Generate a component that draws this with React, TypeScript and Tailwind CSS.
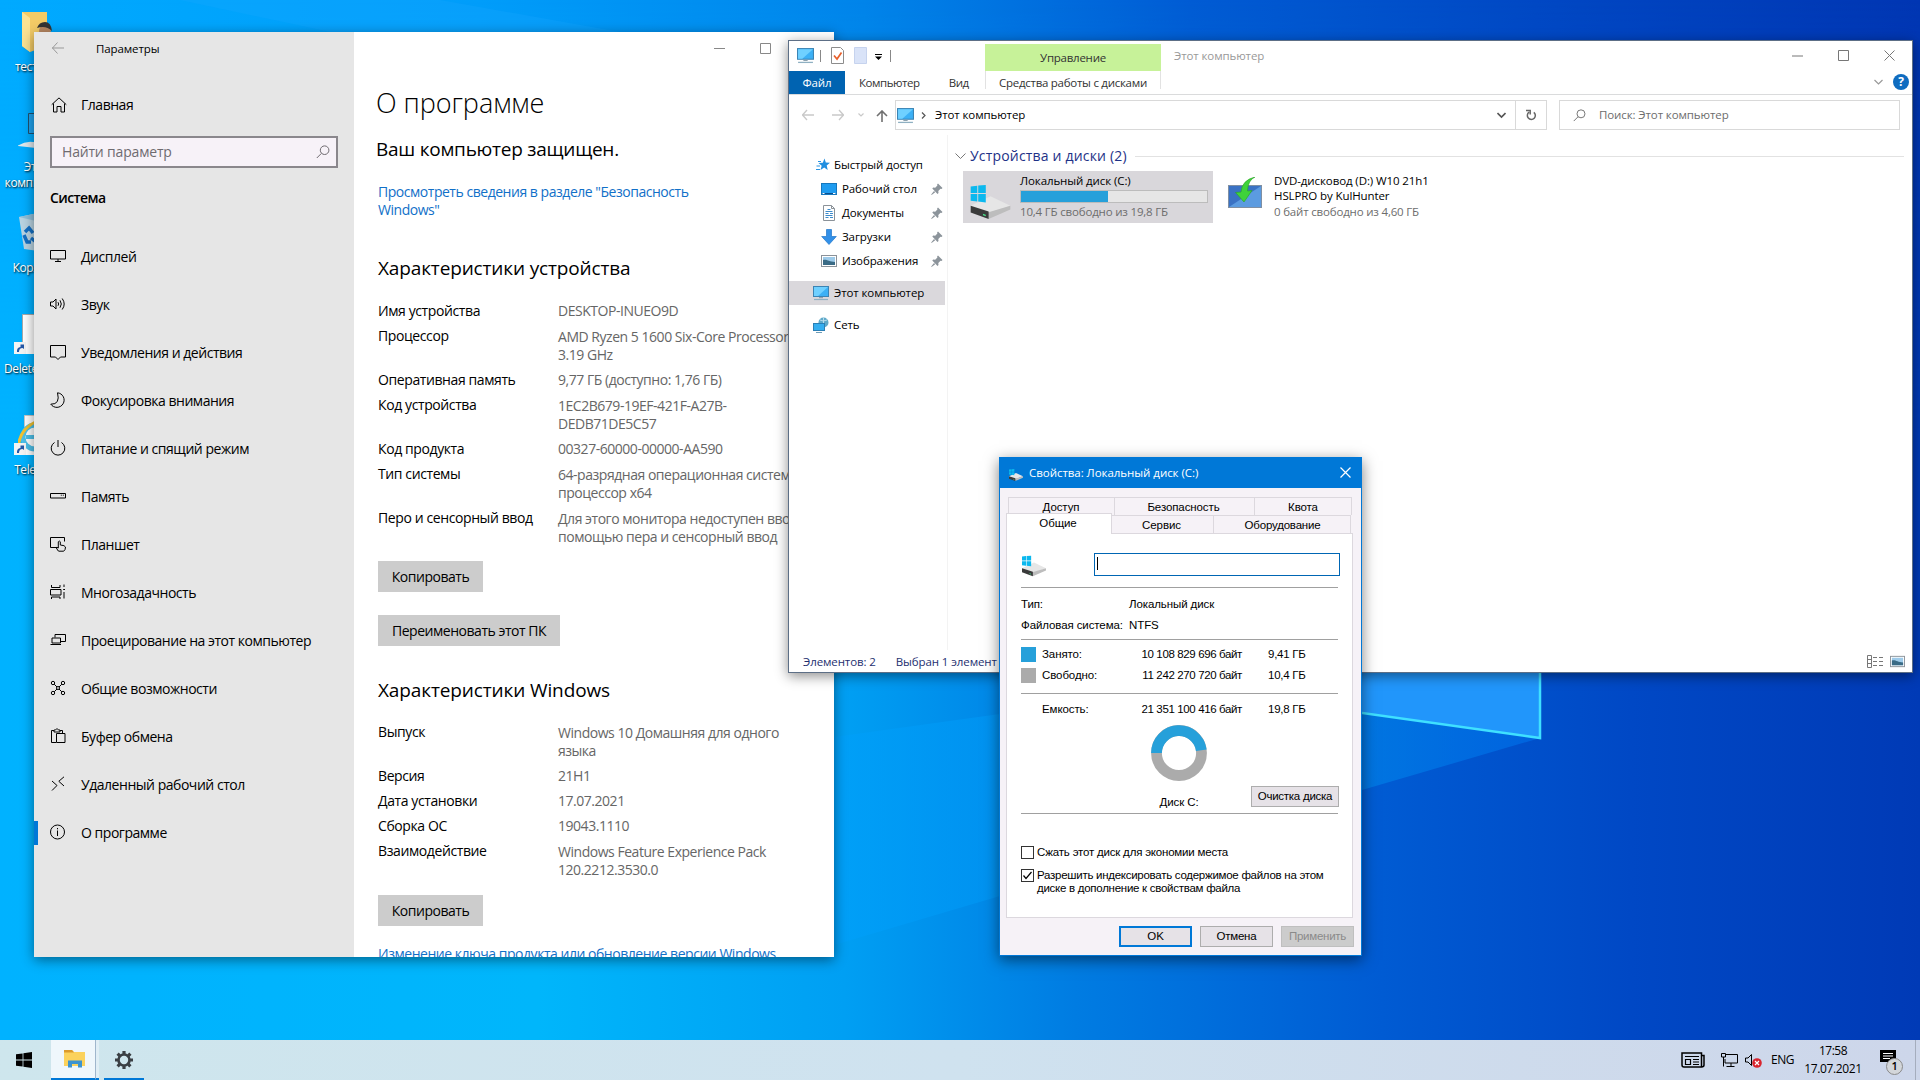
import type { ReactNode } from 'react';

interface IconProps {
  children: ReactNode;
  className?: string;
  viewBox?: string;
}

// Thin outline icon on a 16px grid
function Line({ children, className = 'h-4 w-4', viewBox = '0 0 16 16' }: IconProps) {
  return (
    <svg
      viewBox={viewBox}
      className={`shrink-0 ${className}`}
      fill="none"
      stroke="currentColor"
      strokeWidth="1"
    >
      {children}
    </svg>
  );
}

function MonitorIcon({ className = 'h-4 w-4' }: { className?: string }) {
  return (
    <svg viewBox="0 0 16 16" className={`shrink-0 ${className}`}>
      <rect x="0.5" y="1.5" width="15" height="10" fill="#3cb0f5" stroke="#3b84b4" />
      <path d="M1 2h14L5 11H1z" fill="#6fd0ff" />
      <path d="M6 12h4v1.2H6z" fill="#8ea3b0" />
      <path d="M1 14.5h14" stroke="#8fb0c2" strokeWidth="1.2" />
    </svg>
  );
}

function DriveIcon({ className }: { className: string }) {
  return (
    <svg viewBox="0 0 42 36" className={`shrink-0 ${className}`}>
      <path d="M0 22L21 12L42 22L20 30L0 25z" fill="#e6e6e6" />
      <path d="M18 29L42 22V26L19 36z" fill="#bdbdbd" />
      <path d="M0 22L19 28V36L0 29z" fill="#3a3a3a" />
      <path d="M13 30.500l3 1v1.500l-3-1z" fill="#4be08a" />
      <path d="M0 1.500L7 .7V8.500H0zM8 .6L16 0V8.500H8zM0 9.500H7V17.500L0 16.700zM8 9.500H16V18.400L8 17.600z" fill="#0bb8ee" />
    </svg>
  );
}

function PictureIcon({ className = 'h-4 w-4' }: { className?: string }) {
  return (
    <svg viewBox="0 0 16 16" className={`shrink-0 ${className}`}>
      <rect x="0.5" y="2.5" width="15" height="11" fill="#fff" stroke="#8b9299" />
      <rect x="2" y="4" width="12" height="8" fill="#9ecbea" />
      <path d="M2 7c4-1 6 2 12 2v3H2z" fill="#3a6b86" />
    </svg>
  );
}

function SearchIcon({ className = 'h-[14px] w-[14px]' }: { className?: string }) {
  return (
    <Line className={className} viewBox="0 0 14 14">
      <circle cx="8.6" cy="5.2" r="4.3" />
      <path d="M5.4 8.4L.8 13" />
    </Line>
  );
}

function PinIcon() {
  return (
    <svg viewBox="0 0 12 12" className="h-3 w-3 shrink-0" fill="#8c949b">
      <path d="M7 .5L11.500 5l-1 .9-1-.2L7.300 8l.2 2-1 .9L1.300 5.600l.9-1 2 .2L6.400 2.500 6.100 1.400zM3 8l1.200 1.200L.6 11.900l-.4-.4z" />
    </svg>
  );
}

const NAV_ITEMS: { label: string; icon: ReactNode }[] = [
  { label: 'Дисплей', icon: <path d="M.5 2.500h15v8.500H.5zM8 11v2.500M5 13.500h6" /> },
  { label: 'Звук', icon: <path d="M.5 6v4H3l3 3V3L3 6zM8 6.200q1.300 1.800 0 3.600M10 4.300q2.600 3.700 0 7.400M12.200 2.500q4 5.500 0 11" /> },
  { label: 'Уведомления и действия', icon: <path d="M.5 1.500h15v11.500H10.500L8 15.500 5.500 13H.5z" /> },
  { label: 'Фокусировка внимания', icon: <path d="M7.500.800A7.300 7.300 0 1 1 .8 12.200Q10.500 12.500 7.500.8z" /> },
  { label: 'Питание и спящий режим', icon: <path d="M4.500 2.500A6.800 6.800 0 1 0 11.500 2.500M8 0v7" /> },
  { label: 'Память', icon: <path d="M.5 5.500h15v4.500H.5zM10.800 7.200h1M12.800 7.200h1" /> },
  { label: 'Планшет', icon: <path d="M7.500 11.500H.5v-10h14v4M8.300 15L6.300 12q.2-1.300 2 0V5.800q1-1.600 2 0V9q4.700.3 5.200 2 0 3-1.800 4.200H9z" /> },
  { label: 'Многозадачность', icon: <path d="M1.500 1v2.500h8.500V1M.5 5.500h10.500v5.500H.5zM1.500 15v-2h8.500v2M14 .5v2.500M14 8v6.500M13.200 5.500h1.800" /> },
  { label: 'Проецирование на этот компьютер', icon: <path d="M5 5.500V2.500h10.500v7H11M2 6h8.500v5H2zM.5 12.500h10.500" /> },
  {
    label: 'Общие возможности',
    icon: (
      <>
        <circle cx="3" cy="3" r="1.700" />
        <circle cx="13" cy="3" r="1.700" />
        <circle cx="3" cy="13" r="1.700" />
        <circle cx="13" cy="13" r="1.700" />
        <circle cx="8" cy="8" r="1.500" />
        <path d="M4.200 4.200L7 7M11.800 4.200L9 7M4.200 11.800L7 9M11.800 11.800L9 9" />
      </>
    ),
  },
  { label: 'Буфер обмена', icon: <path d="M6 14.500H1.500v-12H4M10 2.500h2.500V5M4 4V2h1.500Q7-1 8.500 2H10v2zM6.500 5.500h8.500v9H6.500z" /> },
  { label: 'Удаленный рабочий стол', icon: <path d="M2 5l5 4.500L2 14.500M14 .8L8.800 5.300 14 10" /> },
  {
    label: 'О программе',
    icon: (
      <>
        <circle cx="7.500" cy="8" r="7" />
        <path d="M7.500 6.500V12M7.500 4v1.300" />
      </>
    ),
  },
];

const DEVICE_SPECS: [string, string[]][] = [
  ['Имя устройства', ['DESKTOP-INUEO9D']],
  ['Процессор', ['AMD Ryzen 5 1600 Six-Core Processor', '3.19 GHz']],
  ['Оперативная память', ['9,77 ГБ (доступно: 1,76 ГБ)']],
  ['Код устройства', ['1EC2B679-19EF-421F-A27B-', 'DEDB71DE5C57']],
  ['Код продукта', ['00327-60000-00000-AA590']],
  ['Тип системы', ['64-разрядная операционная система,', 'процессор x64']],
  ['Перо и сенсорный ввод', ['Для этого монитора недоступен ввод с', 'помощью пера и сенсорный ввод']],
];

const WINDOWS_SPECS: [string, string[]][] = [
  ['Выпуск', ['Windows 10 Домашняя для одного', 'языка']],
  ['Версия', ['21H1']],
  ['Дата установки', ['17.07.2021']],
  ['Сборка ОС', ['19043.1110']],
  ['Взаимодействие', ['Windows Feature Experience Pack', '120.2212.3530.0']],
];

function SpecTable({ rows }: { rows: [string, string[]][] }) {
  return (
    <dl>
      {rows.map(([label, lines]) => (
        <div key={label} className={`flex leading-[18px] ${lines.length > 1 ? 'h-11' : 'h-[25px]'}`}>
          <dt className="w-[180px] shrink-0 tracking-[-0.4px]">{label}</dt>
          <dd className={`whitespace-nowrap text-[#666] ${lines.length > 1 ? 'pt-px' : ''}`}>
            {lines.map((line) => (
              <div key={line}>{line}</div>
            ))}
          </dd>
        </div>
      ))}
    </dl>
  );
}

function SettingsWindow() {
  return (
    <section className="absolute left-[34px] top-8 flex h-[925px] w-[800px] overflow-hidden bg-white text-sm tracking-[-0.47px] text-black shadow-[0_3px_12px_rgba(0,0,0,0.45)]">
      <aside className="flex w-80 shrink-0 flex-col bg-[#e6e6e6]">
        <div className="flex h-8 items-center pl-[18px]">
          <Line className="h-3 w-3 text-[#999]" viewBox="0 0 12 12">
            <path d="M0 6h12M5.500.5L.5 6l5 5.500" />
          </Line>
          <span className="pl-8 pt-0.5 text-[11.500px] tracking-[-0.1px]">Параметры</span>
        </div>
        <div className="mt-[25px] flex h-8 items-center pl-[17px]">
          <Line className="h-4 w-4">
            <path d="M.7 7.700L8 .9l7.300 6.800M2.500 6.500v8.500h3.500V9.500h4V15h3.500V6.500" />
          </Line>
          <span className="pl-[14px]">Главная</span>
        </div>
        <div className="ml-4 mt-[15px] flex h-8 w-72 items-center justify-between border-2 border-[#8a878c] bg-[#f7f2f8] pl-2.5 pr-1.5 text-[#6f6b70]">
          <span className="tracking-[-0.18px]">Найти параметр</span>
          <SearchIcon />
        </div>
        <h2 className="mt-5 h-5 pl-4 font-semibold leading-5 tracking-[-0.6px]">Система</h2>
        <nav className="mt-[25px]">
          {NAV_ITEMS.map((item) => (
            <div key={item.label} className="flex h-12 items-center">
              <span className={`h-6 w-1 ${item.label === 'О программе' ? 'bg-[#0078d7]' : ''}`} />
              <Line className="-mt-[3px] ml-3 h-4 w-4">{item.icon}</Line>
              <span className="pl-[15px]">{item.label}</span>
            </div>
          ))}
        </nav>
      </aside>

      <main className="flex grow flex-col pl-6">
        <div className="flex h-8 shrink-0 items-center gap-[35px] pl-[336px] text-[#888]">
          <Line className="h-[11px] w-[11px]" viewBox="0 0 11 11">
            <path d="M0 5.500h11" />
          </Line>
          <Line className="h-[11px] w-[11px]" viewBox="0 0 11 11">
            <path d="M.5.500h10v10H.5z" />
          </Line>
        </div>
        <h1 className="-ml-[2px] mt-[21px] h-9 shrink-0 text-[27px] font-light leading-9 tracking-[-0.05px]">О программе</h1>
        <p className="-ml-[2px] mt-[14px] h-7 shrink-0 text-[19px] leading-7 tracking-[-0.25px]">Ваш компьютер защищен.</p>
        <p className="mt-5 h-9 shrink-0 leading-[18px] text-[#1170c8]">
          Просмотреть сведения в разделе "Безопасность
          <br />
          Windows"
        </p>
        <h2 className="mt-[35px] h-7 shrink-0 text-[19px] leading-7 tracking-[-0.14px]">Характеристики устройства</h2>
        <div className="mt-[20px] shrink-0">
          <SpecTable rows={DEVICE_SPECS} />
        </div>
        <button className="mt-[8px] h-[31px] w-[105px] shrink-0 bg-[#cccccc]">Копировать</button>
        <button className="mt-[23px] h-[31px] w-[182px] shrink-0 bg-[#cccccc]">Переименовать этот ПК</button>
        <h2 className="mt-[30px] h-7 shrink-0 text-[19px] leading-7 tracking-[-0.12px]">Характеристики Windows</h2>
        <div className="mt-[19px] shrink-0">
          <SpecTable rows={WINDOWS_SPECS} />
        </div>
        <button className="mt-[9px] h-[31px] w-[105px] shrink-0 bg-[#cccccc]">Копировать</button>
        <p className="mt-[18px] shrink-0 whitespace-nowrap text-[#1170c8]">Изменение ключа продукта или обновление версии Windows</p>
      </main>
    </section>
  );
}

const QUICK_ACCESS: { label: string; icon: ReactNode }[] = [
  {
    label: 'Рабочий стол',
    icon: (
      <svg viewBox="0 0 16 16" className="h-4 w-4">
        <rect x="0.5" y="2.500" width="15" height="11" fill="#1f9cf0" stroke="#1677bd" />
        <path d="M1 12.500h14" stroke="#0a4f8f" />
        <path d="M1.500 12.500h2M12 12.500h2.500" stroke="#fff" />
      </svg>
    ),
  },
  {
    label: 'Документы',
    icon: (
      <svg viewBox="0 0 16 16" className="h-4 w-4">
        <path d="M2.500.500h8l3 3v12h-11z" fill="#fff" stroke="#8b9299" />
        <path d="M10.500.500v3h3" fill="none" stroke="#8b9299" />
        <path d="M6.500 4.500h3M4.500 6.500h7M4.500 8.500h3M9 8.500h3M4.500 10.500h7M4.500 12.500h3M9 12.500h3" stroke="#3d8bcb" />
      </svg>
    ),
  },
  {
    label: 'Загрузки',
    icon: (
      <svg viewBox="0 0 16 16" className="h-4 w-4">
        <path d="M5.500.500h5v7h4.800L8 15.500.7 7.500h4.800z" fill="#3290e8" stroke="#1f76c9" strokeWidth="0.700" />
      </svg>
    ),
  },
  { label: 'Изображения', icon: <PictureIcon /> },
];

function ExplorerWindow() {
  return (
    <section className="absolute left-[788px] top-10 flex h-[633px] w-[1125px] flex-col border border-[#5d6f86] bg-white text-[11.500px] tracking-[-0.1px] text-black shadow-[0_3px_12px_rgba(0,0,0,0.45)]">
      {/* Title bar and ribbon tabs */}
      <header className="flex h-[54px] shrink-0 border-b border-[#dadbdc] text-[#333]">
        <div className="flex w-[196px] shrink-0 flex-col">
          <div className="flex h-[29px] items-center pl-2">
            <MonitorIcon className="h-[17px] w-[17px]" />
            <span className="ml-[6px] h-3 w-px bg-[#888]" />
            <svg viewBox="0 0 13 17" className="ml-[10px] h-[17px] w-[13px]">
              <path d="M.5.500h9l3 3v13H.5z" fill="#fff" stroke="#8c8c8c" />
              <path d="M3 8.500l3 3.500 4.500-6.500" fill="none" stroke="#e8602c" strokeWidth="1.700" />
            </svg>
            <svg viewBox="0 0 13 17" className="ml-[10px] h-[17px] w-[13px]">
              <path d="M.5.500h12v16H.5z" fill="#d9e3f8" stroke="#c6d3ee" />
            </svg>
            <svg viewBox="0 0 7 6" className="ml-2 mt-[3px] h-[6px] w-[7px] fill-black">
              <path d="M0 0h7v1H0zM0 2.500h7L3.500 6z" />
            </svg>
            <span className="ml-2 h-3 w-px bg-[#888]" />
          </div>
          <div className="mt-px flex h-[23px] items-center">
            <span className="flex h-full w-14 items-center justify-center bg-[#0063b1] text-white">Файл</span>
            <span className="pl-[14px] tracking-[-0.45px]">Компьютер</span>
            <span className="pl-[29px] tracking-[-0.45px]">Вид</span>
          </div>
        </div>
        <div className="flex w-44 shrink-0 flex-col items-center pt-[3px]">
          <span className="flex h-[27px] w-full items-center justify-center bg-[#c7f299] tracking-[-0.25px]">Управление</span>
          <span className="flex h-[18px] w-full items-end justify-center whitespace-nowrap border-x border-[#e2e2e2] leading-3 tracking-[-0.27px]">
            Средства работы с дисками
          </span>
        </div>
        <span className="pl-[13px] pt-[6px] text-[#999]">Этот компьютер</span>
        <div className="ml-auto flex flex-col items-end">
          <div className="flex h-7 items-center gap-[35px] pr-[17px] text-[#777]">
            <Line className="h-[11px] w-[11px]" viewBox="0 0 11 11">
              <path d="M0 6h11" />
            </Line>
            <Line className="h-[11px] w-[11px]" viewBox="0 0 11 11">
              <path d="M.5.500h10v10H.5z" />
            </Line>
            <Line className="h-[11px] w-[11px]" viewBox="0 0 11 11">
              <path d="M.5.500l10 10M10.500.500l-10 10" />
            </Line>
          </div>
          <div className="flex items-center gap-[10px] pr-[3px] pt-[5px] text-[#999]">
            <Line className="h-2 w-[9px]" viewBox="0 0 9 8">
              <path d="M.5 2l4 4 4-4" strokeWidth="1.200" />
            </Line>
            <span className="flex h-4 w-4 items-center justify-center rounded-full bg-[#0f6cc0] text-xs font-bold text-white">?</span>
          </div>
        </div>
      </header>

      {/* Address row */}
      <div className="flex h-10 shrink-0 items-center pl-[13px] pr-[12px]">
        <Line className="h-3 w-3 text-[#c9c9c9]" viewBox="0 0 12 12">
          <path d="M0 6h12M5 1L.5 6 5 11" strokeWidth="1.300" />
        </Line>
        <Line className="ml-[18px] h-3 w-3 text-[#c9c9c9]" viewBox="0 0 12 12">
          <path d="M0 6h12M7 1l4.500 5L7 11" strokeWidth="1.300" />
        </Line>
        <Line className="ml-[14px] h-1.5 w-1.5 text-[#c9c9c9]" viewBox="0 0 6 6">
          <path d="M.5 1.500L3 4l2.500-2.500" strokeWidth="1.200" />
        </Line>
        <Line className="ml-[12px] mt-0.5 h-3 w-3 text-[#707070]" viewBox="0 0 12 12">
          <path d="M6 12V1M1 6l5-5 5 5" strokeWidth="1.600" />
        </Line>
        <div className="ml-[7px] flex h-[30px] w-[652px] shrink-0 items-center border border-[#d9d9d9] pl-px">
          <MonitorIcon className="h-[17px] w-[17px]" />
          <Line className="ml-[7px] h-[7px] w-[5px] text-[#555]" viewBox="0 0 5 7">
            <path d="M1 .5l3 3-3 3" strokeWidth="1.200" />
          </Line>
          <span className="pl-[9px]">Этот компьютер</span>
          <Line className="ml-auto h-2 w-[9px] text-[#555]" viewBox="0 0 9 8">
            <path d="M.5 2l4 4 4-4" strokeWidth="1.600" />
          </Line>
          <span className="ml-[9px] flex h-full w-[31px] items-center justify-center border-l border-[#d9d9d9]">
            <Line className="h-3 w-3 text-[#666]" viewBox="0 0 12 12">
              <path d="M8.800 3.300A4 4 0 1 1 4 3.200M1 1.500h4.200v4" strokeWidth="1.500" />
            </Line>
          </span>
        </div>
        <div className="ml-3 flex h-[30px] grow items-center border border-[#d9d9d9] pl-[13px] text-[#6d6d6d]">
          <SearchIcon className="h-[13px] w-[13px]" />
          <span className="pl-[13px]">Поиск: Этот компьютер</span>
        </div>
      </div>

      <div className="flex grow">
        <nav className="flex w-[159px] shrink-0 flex-col border-r border-[#f3f3f3] pt-[18px]">
          <div className="flex h-6 items-center pl-[27px]">
            <svg viewBox="0 0 14 14" className="h-[14px] w-[14px]">
              <path d="M8.500.5l1.300 4 4.200.2-3.300 2.800 1 4.500-3.500-2.400L4.500 12l1.200-4.300L2.500 5l4.300-.2z" fill="#1f8ee0" />
              <path d="M2 3.500h3M.5 8H4M0 11.500h4" stroke="#2a95e3" />
            </svg>
            <span className="pl-1">Быстрый доступ</span>
          </div>
          {QUICK_ACCESS.map((item) => (
            <div key={item.label} className="flex h-6 items-center pl-8 pr-[4px]">
              {item.icon}
              <span className="grow pl-[5px]">{item.label}</span>
              <PinIcon />
            </div>
          ))}
          <div className="mt-2 flex h-6 w-[156px] items-center bg-[#dad8dc] pl-6">
            <MonitorIcon />
            <span className="pl-[5px]">Этот компьютер</span>
          </div>
          <div className="mt-2 flex h-6 items-center pl-6">
            <svg viewBox="0 0 16 16" className="h-4 w-4">
              <circle cx="10.500" cy="5.500" r="5" fill="#5fa9c9" />
              <path d="M7 3q3 2 7 0M10.500.500v9" stroke="#b7dcec" fill="none" />
              <rect x="0.500" y="6.500" width="11" height="7" fill="#35aef0" stroke="#2b7fb5" />
              <path d="M3 15.500h6" stroke="#6f9db8" />
            </svg>
            <span className="pl-[5px]">Сеть</span>
          </div>
        </nav>

        <div className="flex grow flex-col">
          <div className="mt-[12px] flex h-[18px] items-center pl-[7px] pr-2">
            <Line className="h-2 w-[11px] text-[#777]" viewBox="0 0 11 8">
              <path d="M.5 1.500l5 5 5-5" />
            </Line>
            <span className="pl-1 text-sm tracking-[0.18px] text-[#1e3287]">Устройства и диски (2)</span>
            <span className="ml-2 h-px grow bg-[#e2e2e2]" />
          </div>
          <div className="mt-[6px] flex pl-[15px] leading-[15px]">
            <div className="flex h-[52px] w-[250px] bg-[#d9d7db] pl-[7px]">
              <DriveIcon className="mt-[14px] h-[34px] w-[41px]" />
              <div className="pl-[9px] pt-[2px]">
                <p>Локальный диск (C:)</p>
                <div className="mt-[2px] h-[13px] w-[188px] border border-[#bcbcbc] bg-[#e6e6e6]">
                  <div className="h-full w-[87px] bg-[#26a0da]" />
                </div>
                <p className="mt-[1px] tracking-[-0.18px] text-[#6d6d6d]">10,4 ГБ свободно из 19,8 ГБ</p>
              </div>
            </div>
            <div className="flex h-[52px] pl-[15px]">
              <svg viewBox="0 0 34 32" className="mt-[6px] h-8 w-[34px]">
                <rect x="0.500" y="8.500" width="33" height="22" fill="#3a72c4" stroke="#7f8fa3" />
                <path d="M1 30L33 9v21z" fill="#5b9be0" />
                <path d="M27 0Q20 3 19.500 14L24 13.500 16 25 7.500 15.500l5.500-.5Q14 3 27 0z" fill="#3fd23a" stroke="#26a322" strokeWidth="0.600" />
              </svg>
              <div className="pl-3 pt-[2px]">
                <p>DVD-дисковод (D:) W10 21h1</p>
                <p>HSLPRO by KulHunter</p>
                <p className="mt-[1px] tracking-[-0.18px] text-[#6d6d6d]">0 байт свободно из 4,60 ГБ</p>
              </div>
            </div>
          </div>
        </div>
      </div>

      <footer className="flex h-[22px] shrink-0 items-center pl-[14px] pr-[7px] pt-[2px] text-[#1e3070]">
        <span>Элементов: 2</span>
        <span className="pl-5 tracking-[-0.1px]">Выбран 1 элемент</span>
        <Line className="-mt-0.5 ml-auto h-[13px] w-4 text-[#777]" viewBox="0 0 16 13">
          <path d="M.5.500h4v12h-4zM.5 4.500h4M.5 8.500h4M6 2.500h4M12 2.500h4M6 6.500h4M12 6.500h4M6 10.500h4M12 10.500h4" />
        </Line>
        <PictureIcon className="-mt-0.5 ml-[7px] h-[15px] w-[15px]" />
      </footer>
    </section>
  );
}

function Rule({ className = '' }: { className?: string }) {
  return <hr className={`w-[317px] border-[#a0a0a0] ${className}`} />;
}

function UsageRow({ label, bytes, size, swatch }: { label: string; bytes: string; size: string; swatch?: string }) {
  return (
    <div className="flex h-[21px] items-center">
      <span className={`h-[15px] w-[15px] ${swatch ?? ''}`} />
      <span className="w-[85px] pl-[6px]">{label}</span>
      <span className="w-[121px] text-right tracking-[-0.37px]">{bytes}</span>
      <span className="pl-[26px] tracking-[-0.25px]">{size}</span>
    </div>
  );
}

function PropertiesDialog() {
  return (
    <section className="absolute left-[999px] top-[457px] flex h-[499px] w-[363px] flex-col border border-[#0078d7] bg-[#f6f2f7] font-['Liberation_Sans',sans-serif] text-[11.500px] tracking-[-0.1px] text-black shadow-[0_4px_14px_rgba(0,0,0,0.5)]">
      <header className="flex h-[30px] shrink-0 items-center bg-[#0078d7] pb-px pl-[9px] pr-[10px] font-['Open_Sans',sans-serif] text-white">
        <DriveIcon className="mt-1 h-[12px] w-[14px]" />
        <span className="pl-[6px] tracking-[-0.04px]">Свойства: Локальный диск (C:)</span>
        <Line className="ml-auto h-[11px] w-[11px]" viewBox="0 0 11 11">
          <path d="M.5.500l10 10M10.500.500l-10 10" strokeWidth="1.200" />
        </Line>
      </header>

      <div className="ml-2 mt-[9px] flex h-[18px] w-[344px] shrink-0 border border-b-0 border-[#dcd8de] leading-[18px]">
        <span className="w-[105px] pr-px text-center">Доступ</span>
        <span className="w-[141px] border-x border-[#dcd8de] pr-[2px] text-center">Безопасность</span>
        <span className="grow text-center">Квота</span>
      </div>
      <div className="ml-[6px] flex h-[18px] w-[346px] shrink-0">
        <span className="relative -top-[2px] z-10 h-[21px] w-[106px] border border-b-0 border-[#dcd8de] bg-white pr-[2px] text-center leading-[18px]">Общие</span>
        <span className="w-[101px] border-t border-[#dcd8de] pr-[2px] text-center leading-[18px]">Сервис</span>
        <span className="w-[138px] border-x border-t border-[#dcd8de] pl-px text-center leading-[18px] tracking-[-0.2px]">Оборудование</span>
      </div>

      <div className="ml-[6px] flex h-[385px] w-[347px] shrink-0 flex-col border border-[#dcd8de] bg-white pl-[14px]">
        <div className="mt-[18px] flex h-6 items-center">
          <DriveIcon className="ml-px mt-1 h-[22px] w-6" />
          <div className="ml-12 h-[23px] w-[246px] border border-[#0066b4] pl-[2px] pt-[3px]">
            <div className="h-[13px] w-px bg-black" />
          </div>
        </div>
        <Rule className="mt-[11px]" />
        <div className="mt-[6px] flex h-[21px] items-center">
          <span className="w-[108px]">Тип:</span>
          <span>Локальный диск</span>
        </div>
        <div className="flex h-[21px] items-center">
          <span className="w-[108px]">Файловая система:</span>
          <span>NTFS</span>
        </div>
        <Rule className="mt-[3px]" />
        <div className="mt-[4px]">
          <UsageRow label="Занято:" bytes="10 108 829 696 байт" size="9,41 ГБ" swatch="bg-[#26a0da]" />
          <UsageRow label="Свободно:" bytes="11 242 270 720 байт" size="10,4 ГБ" swatch="bg-[#ababab]" />
        </div>
        <Rule className="mt-[7px]" />
        <div className="mt-[5px]">
          <UsageRow label="Емкость:" bytes="21 351 100 416 байт" size="19,8 ГБ" />
        </div>
        <div className="flex h-[93px]">
          <div className="flex w-[230px] flex-col items-center pl-[86px] pt-[5px]">
            <svg viewBox="0 0 56 56" className="h-14 w-14 shrink-0" fill="none" strokeWidth="10.800">
              <circle cx="28" cy="28" r="22.500" stroke="#ababab" />
              <path d="M5.500 28A22.500 22.500 0 0 1 50.300 25.200" stroke="#26a0da" />
            </svg>
            <span className="mt-[13px]">Диск C:</span>
          </div>
          <button className="mt-[66px] h-[21px] w-[88px] border border-[#adadad] bg-[#e6e2e7] tracking-[-0.25px]">Очистка диска</button>
        </div>
        <Rule />
        <div className="mt-[32px] flex h-[13px] items-center">
          <span className="h-[13px] w-[13px] border border-[#333]" />
          <span className="pl-[3px] tracking-[-0.2px]">Сжать этот диск для экономии места</span>
        </div>
        <div className="mt-[10px] flex">
          <span className="h-[13px] w-[13px] border border-[#333]">
            <Line className="h-[11px] w-[11px]" viewBox="0 0 11 11">
              <path d="M1.500 5.500L4 8.500l5.500-6.500" strokeWidth="1.200" />
            </Line>
          </span>
          <p className="pl-[3px] leading-[13px] tracking-[-0.27px]">
            Разрешить индексировать содержимое файлов на этом
            <br />
            диске в дополнение к свойствам файла
          </p>
        </div>
      </div>

      <footer className="mt-[8px] flex h-[21px] justify-end gap-2 pr-[7px]">
        <button className="w-[73px] border-2 border-[#0078d7] bg-[#e6e2e7]">OK</button>
        <button className="w-[73px] border border-[#adadad] bg-[#e6e2e7] tracking-[-0.25px]">Отмена</button>
        <button className="w-[73px] border border-[#bfbfbf] bg-[#cccccc] tracking-[-0.25px] text-[#8a8a8a]">Применить</button>
      </footer>
    </section>
  );
}

function ShortcutArrow() {
  return (
    <svg viewBox="0 0 12 12" className="absolute bottom-0 left-0 h-3 w-3">
      <path d="M0 0h12v12H0z" fill="#f4f4f4" />
      <path d="M3 10Q2.500 5.500 6.500 5V2.500h3.500V7L8.500 6Q5 6 5 10z" fill="#2458a8" />
    </svg>
  );
}

const DESKTOP_ICONS: { label: string; top: string; icon: ReactNode }[] = [
  {
    label: 'тестер1',
    top: 'top-[12px]',
    icon: (
      <svg viewBox="0 0 40 40" className="h-10 w-10">
        <path d="M4 0h25v34L12 40 4 34z" fill="#f3cb66" />
        <path d="M4 0l8 6v34L4 34z" fill="#fbe293" />
        <circle cx="27" cy="19" r="6" fill="#b98963" />
        <path d="M19 16Q21 10 27 10t7 9Q28 13 19 16z" fill="#333" />
      </svg>
    ),
  },
  {
    label: 'Этот компьютер',
    top: 'top-[112px]',
    icon: (
      <svg viewBox="0 0 40 40" className="h-10 w-10">
        <path d="M10.500 1.500H40v20H10.500z" fill="#1fa3ee" stroke="#20506f" />
        <path d="M-1 34q8-5 16-4h21v8z" fill="#dfe9ee" />
      </svg>
    ),
  },
  {
    label: 'Корзина',
    top: 'top-[213px]',
    icon: (
      <svg viewBox="0 0 40 40" className="h-10 w-10">
        <path d="M1 4L20 0l20 4-5 36L6 36z" fill="#b9d4e2" />
        <path d="M1 4l17 4h22l-20-8z" fill="#8fbfd9" />
        <path d="M7 19l4-4 4 5M6 22l3 7h4M13 25l5 4" fill="none" stroke="#1470c4" strokeWidth="3.500" />
      </svg>
    ),
  },
  {
    label: 'DeleteTemp',
    top: 'top-[314px]',
    icon: (
      <svg viewBox="0 0 40 40" className="h-10 w-10">
        <path d="M4.500.500H38v40H4.500z" fill="#fff" stroke="#a8a8a8" />
      </svg>
    ),
  },
  {
    label: 'Teleport',
    top: 'top-[415px]',
    icon: (
      <svg viewBox="0 0 40 40" className="h-10 w-10">
        <path d="M6.500.500H38v40H6.500z" fill="#fff" stroke="#c8c8c8" />
        <circle cx="17" cy="22" r="12" fill="none" stroke="#4cc0ea" strokeWidth="5" />
        <path d="M8 22h20" stroke="#4cc0ea" strokeWidth="4" />
        <path d="M1 34Q-1 16 19 6" fill="none" stroke="#f2c230" strokeWidth="3" />
      </svg>
    ),
  },
];

function DesktopIcon({ label, top, icon }: { label: string; top: string; icon: ReactNode }) {
  return (
    <div className={`absolute left-0 flex w-[72px] flex-col items-center ${top}`}>
      <div className="relative h-10 w-11 pl-1">
        {icon}
        {/^[A-Z]/.test(label) && <ShortcutArrow />}
      </div>
      <span className="mt-[7px] text-center text-xs leading-4 tracking-[-0.4px] text-white [text-shadow:1px_1px_2px_#000]">{label}</span>
    </div>
  );
}

function Wallpaper() {
  return (
    <svg viewBox="0 0 1920 1080" className="absolute inset-0 h-full w-full">
      <defs>
        <linearGradient id="sky" x1="0" y1="0" x2="1" y2="0">
          <stop offset="0" stopColor="#00aaff" />
          <stop offset="0.25" stopColor="#009dfa" />
          <stop offset="0.45" stopColor="#0084ea" />
          <stop offset="0.62" stopColor="#005cd4" />
          <stop offset="0.8" stopColor="#0048c4" />
          <stop offset="1" stopColor="#0036b3" />
        </linearGradient>
        <linearGradient id="floor" x1="0" y1="0" x2="1" y2="0">
          <stop offset="0" stopColor="#00b2ff" />
          <stop offset="0.28" stopColor="#00b6fb" />
          <stop offset="0.44" stopColor="#009ff3" />
          <stop offset="0.56" stopColor="#007ce2" />
          <stop offset="0.72" stopColor="#005bd3" />
          <stop offset="0.85" stopColor="#0048c5" />
          <stop offset="1" stopColor="#003ab6" />
        </linearGradient>
        <linearGradient id="fade" x1="0" y1="0" x2="0" y2="1">
          <stop offset="0" stopColor="#000" />
          <stop offset="0.4" stopColor="#fff" />
        </linearGradient>
        <mask id="lower">
          <rect width="1920" height="1080" fill="url(#fade)" />
        </mask>
        <linearGradient id="beam" x1="0" y1="0" x2="1" y2="0">
          <stop offset="0" stopColor="#00a0fa" />
          <stop offset="0.75" stopColor="#0086ea" />
          <stop offset="1" stopColor="#0070ec" />
        </linearGradient>
      </defs>
      <rect width="1920" height="1080" fill="url(#sky)" />
      <rect width="1920" height="1080" fill="url(#floor)" mask="url(#lower)" />
      <path d="M180 0L330 32H620L440 0z" fill="#1ba6ff" opacity="0.250" />
      <path d="M834 737L1000 714V673H1540V738L1362 790 1000 896 834 945z" fill="url(#beam)" opacity="0.600" />
      <path d="M1100 673h440v65l-440-62z" fill="#2196fb" />
      <path d="M1540 673v65l-440-62" fill="none" stroke="#3fe0ff" strokeWidth="2.500" />
    </svg>
  );
}

function Taskbar() {
  return (
    <footer className="absolute bottom-0 left-0 flex h-10 w-full items-center bg-linear-to-r from-[#cee6ed] via-[#cfe2ef] to-[#cdd6ea] text-[11.500px] tracking-[-0.2px] text-black">
      <div className="flex h-full w-[51px] items-center pl-4">
        <svg viewBox="0 0 16 16" className="h-4 w-4">
          <path d="M0 2.300L6.600 1.400V7.600H0zM7.400 1.300L16 0v7.600H7.400zM0 8.400h6.600v6.200L0 13.700zM7.400 8.400H16V16l-8.600-1.300z" />
        </svg>
      </div>
      <div className="flex h-full w-11 items-center justify-center border-b-2 border-[#0078d7] bg-[#eff7fc] pl-1">
        <svg viewBox="0 0 22 18" className="h-[18px] w-[22px]">
          <path d="M0 0h8l2 2h11v14H0z" fill="#fbd25c" />
          <path d="M0 0h8l2 2.500H0z" fill="#dc9b2c" />
          <path d="M4 17.500v-7h14v7h-4v-3.500H8v3.500z" fill="#3c94cf" />
        </svg>
      </div>
      <span className="h-full w-1 border-b-2 border-l border-[#9fb6cc] border-b-[#0078d7] bg-[#e0eef5]" />
      <div className="ml-[5px] flex h-full w-10 items-center justify-center border-b-2 border-[#0078d7] pt-px text-[#3a3f44]">
        <svg viewBox="0 0 20 20" className="h-5 w-5" fill="none" stroke="currentColor">
          <circle cx="10" cy="10" r="5.500" strokeWidth="2.600" />
          <path
            d="M10 1v3M10 16v3M1 10h3M16 10h3M3.600 3.600l2.200 2.200M14.200 14.200l2.200 2.200M3.600 16.400l2.200-2.200M14.200 5.800l2.200-2.200"
            strokeWidth="3.200"
          />
        </svg>
      </div>

      <div className="ml-auto flex h-full items-center">
        <svg viewBox="0 0 24 16" className="h-4 w-6" fill="none" stroke="#000">
          <path d="M1 1h19.500v14H3Q1 15 1 13zM20.500 3.500H23V13q0 2-2.500 2" strokeWidth="1.500" />
          <path d="M4 4.500h14M12 7.500h6M12 10h6M12 12.500h6M4.500 7.500h5v5h-5z" strokeWidth="1.200" />
        </svg>
        <svg viewBox="0 0 17 15" className="ml-4 h-[15px] w-[17px]" fill="none" stroke="#000">
          <path d="M5 1.500h11.500v8.500H4V6M.5.500h4v3.500h-4zM2.500 4v9.500M10 10v3.500M5.500 13.500h8" />
        </svg>
        <svg viewBox="0 0 17 15" className="ml-[7px] h-[15px] w-[17px]" fill="none" stroke="#000">
          <path d="M.5 5v4H3l3.500 3.500v-11L3 5z" />
          <circle cx="12" cy="10" r="4.800" fill="#d9242e" stroke="none" />
          <path d="M10 8l4 4M14 8l-4 4" stroke="#fff" strokeWidth="1.200" />
        </svg>
        <span className="w-10 pl-[9px] text-xs tracking-[-0.5px]">ENG</span>
        <div className="flex h-full w-[62px] flex-col items-center text-xs leading-[18px] tracking-[-0.5px]">
          <span className="pt-[2px]">17:58</span>
          <span className="tracking-[-0.35px]">17.07.2021</span>
        </div>
        <div className="relative ml-4 h-5 w-[17px]">
          <svg viewBox="0 0 17 18" className="h-[18px] w-[17px]">
            <path d="M0 0h16v12H12v4l-4-4H0z" />
            <path d="M3 3.500h10M3 6h10M3 8.500h7" stroke="#fff" />
          </svg>
          <span className="absolute left-[6px] top-[8px] flex h-[17px] w-[17px] items-center justify-center rounded-full border border-[#8a8a8a] bg-[#d3d6da] text-[11px] font-semibold">
            1
          </span>
        </div>
        <span className="ml-[18px] h-full w-[5px] border-l border-[#a5adbd]" />
      </div>
    </footer>
  );
}

export default function App() {
  return (
    <div className="relative h-[1080px] w-[1920px] overflow-hidden bg-[#00aaff] font-['Open_Sans','Noto_Sans',sans-serif]">
      <Wallpaper />
      {DESKTOP_ICONS.map((item) => (
        <DesktopIcon key={item.label} {...item} />
      ))}
      <SettingsWindow />
      <ExplorerWindow />
      <PropertiesDialog />
      <Taskbar />
    </div>
  );
}
